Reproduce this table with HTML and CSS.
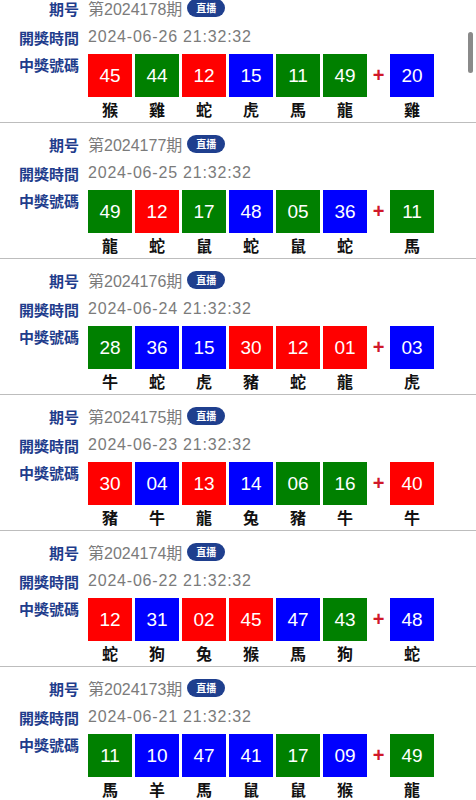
FILE: index.html
```html
<!DOCTYPE html>
<html lang="zh-Hant">
<head>
<meta charset="utf-8">
<link rel="stylesheet" href="styles.css">
</head>
<body>
<div class="list">
  <section class="draw">
    <div class="lbl">期号</div>
    <div class="val"><span class="issue">第2024178期</span><span class="live">直播</span></div>
    <div class="lbl">開獎時間</div>
    <div class="val date">2024-06-26 21:32:32</div>
    <div class="lbl lbl-top">中獎號碼</div>
    <div class="balls">
      <div class="ball"><span class="num red">45</span><span class="zod">猴</span></div>
      <div class="ball"><span class="num green">44</span><span class="zod">雞</span></div>
      <div class="ball"><span class="num red">12</span><span class="zod">蛇</span></div>
      <div class="ball"><span class="num blue">15</span><span class="zod">虎</span></div>
      <div class="ball"><span class="num green">11</span><span class="zod">馬</span></div>
      <div class="ball"><span class="num green">49</span><span class="zod">龍</span></div>
      <div class="plus">+</div>
      <div class="ball"><span class="num blue">20</span><span class="zod">雞</span></div>
    </div>
  </section>
  <section class="draw">
    <div class="lbl">期号</div>
    <div class="val"><span class="issue">第2024177期</span><span class="live">直播</span></div>
    <div class="lbl">開獎時間</div>
    <div class="val date">2024-06-25 21:32:32</div>
    <div class="lbl lbl-top">中獎號碼</div>
    <div class="balls">
      <div class="ball"><span class="num green">49</span><span class="zod">龍</span></div>
      <div class="ball"><span class="num red">12</span><span class="zod">蛇</span></div>
      <div class="ball"><span class="num green">17</span><span class="zod">鼠</span></div>
      <div class="ball"><span class="num blue">48</span><span class="zod">蛇</span></div>
      <div class="ball"><span class="num green">05</span><span class="zod">鼠</span></div>
      <div class="ball"><span class="num blue">36</span><span class="zod">蛇</span></div>
      <div class="plus">+</div>
      <div class="ball"><span class="num green">11</span><span class="zod">馬</span></div>
    </div>
  </section>
  <section class="draw">
    <div class="lbl">期号</div>
    <div class="val"><span class="issue">第2024176期</span><span class="live">直播</span></div>
    <div class="lbl">開獎時間</div>
    <div class="val date">2024-06-24 21:32:32</div>
    <div class="lbl lbl-top">中獎號碼</div>
    <div class="balls">
      <div class="ball"><span class="num green">28</span><span class="zod">牛</span></div>
      <div class="ball"><span class="num blue">36</span><span class="zod">蛇</span></div>
      <div class="ball"><span class="num blue">15</span><span class="zod">虎</span></div>
      <div class="ball"><span class="num red">30</span><span class="zod">豬</span></div>
      <div class="ball"><span class="num red">12</span><span class="zod">蛇</span></div>
      <div class="ball"><span class="num red">01</span><span class="zod">龍</span></div>
      <div class="plus">+</div>
      <div class="ball"><span class="num blue">03</span><span class="zod">虎</span></div>
    </div>
  </section>
  <section class="draw">
    <div class="lbl">期号</div>
    <div class="val"><span class="issue">第2024175期</span><span class="live">直播</span></div>
    <div class="lbl">開獎時間</div>
    <div class="val date">2024-06-23 21:32:32</div>
    <div class="lbl lbl-top">中獎號碼</div>
    <div class="balls">
      <div class="ball"><span class="num red">30</span><span class="zod">豬</span></div>
      <div class="ball"><span class="num blue">04</span><span class="zod">牛</span></div>
      <div class="ball"><span class="num red">13</span><span class="zod">龍</span></div>
      <div class="ball"><span class="num blue">14</span><span class="zod">兔</span></div>
      <div class="ball"><span class="num green">06</span><span class="zod">豬</span></div>
      <div class="ball"><span class="num green">16</span><span class="zod">牛</span></div>
      <div class="plus">+</div>
      <div class="ball"><span class="num red">40</span><span class="zod">牛</span></div>
    </div>
  </section>
  <section class="draw">
    <div class="lbl">期号</div>
    <div class="val"><span class="issue">第2024174期</span><span class="live">直播</span></div>
    <div class="lbl">開獎時間</div>
    <div class="val date">2024-06-22 21:32:32</div>
    <div class="lbl lbl-top">中獎號碼</div>
    <div class="balls">
      <div class="ball"><span class="num red">12</span><span class="zod">蛇</span></div>
      <div class="ball"><span class="num blue">31</span><span class="zod">狗</span></div>
      <div class="ball"><span class="num red">02</span><span class="zod">兔</span></div>
      <div class="ball"><span class="num red">45</span><span class="zod">猴</span></div>
      <div class="ball"><span class="num blue">47</span><span class="zod">馬</span></div>
      <div class="ball"><span class="num green">43</span><span class="zod">狗</span></div>
      <div class="plus">+</div>
      <div class="ball"><span class="num blue">48</span><span class="zod">蛇</span></div>
    </div>
  </section>
  <section class="draw">
    <div class="lbl">期号</div>
    <div class="val"><span class="issue">第2024173期</span><span class="live">直播</span></div>
    <div class="lbl">開獎時間</div>
    <div class="val date">2024-06-21 21:32:32</div>
    <div class="lbl lbl-top">中獎號碼</div>
    <div class="balls">
      <div class="ball"><span class="num green">11</span><span class="zod">馬</span></div>
      <div class="ball"><span class="num blue">10</span><span class="zod">羊</span></div>
      <div class="ball"><span class="num blue">47</span><span class="zod">馬</span></div>
      <div class="ball"><span class="num blue">41</span><span class="zod">鼠</span></div>
      <div class="ball"><span class="num green">17</span><span class="zod">鼠</span></div>
      <div class="ball"><span class="num blue">09</span><span class="zod">猴</span></div>
      <div class="plus">+</div>
      <div class="ball"><span class="num green">49</span><span class="zod">龍</span></div>
    </div>
  </section>
</div>
<div class="scrollbar"></div>
</body>
</html>
```

FILE: styles.css
```css
html, body {
  margin: 0;
  padding: 0;
  background: #ffffff;
  overflow: hidden;
}
body {
  font-family: "Liberation Sans", "Noto Sans CJK TC", sans-serif;
  width: 476px;
  height: 800px;
  position: relative;
}
.list {
  margin-top: -13px;
}
.draw {
  display: grid;
  grid-template-columns: 79px 1fr;
  column-gap: 9px;
  grid-template-rows: 28px 30px auto;
  padding-top: 7px;
  border-bottom: 1px solid #bdbdbd;
  height: 128px;
}
.lbl {
  font-family: "Noto Sans CJK TC", sans-serif;
  font-weight: 700;
  font-size: 15px;
  color: #1f3d8c;
  text-align: right;
  white-space: nowrap;
  display: flex;
  align-items: center;
  justify-content: flex-end;
}
.lbl-top {
  align-items: flex-start;
  margin-top: 2px;
  line-height: 22px;
}
.val {
  display: flex;
  align-items: center;
  color: #7b7b7b;
  font-size: 16px;
  white-space: nowrap;
}
.issue {
  font-family: "Liberation Sans", "Noto Sans CJK TC", sans-serif;
}
.date {
  letter-spacing: 0.8px;
}
.live {
  margin-left: 5px;
  width: 38px;
  height: 18px;
  border-radius: 9px;
  background: #1f3f8e;
  color: #ffffff;
  font-family: "Noto Sans CJK TC", sans-serif;
  font-weight: 700;
  font-size: 10px;
  line-height: 18px;
  text-align: center;
  letter-spacing: 0;
}
.balls {
  display: flex;
  gap: 3px;
  margin-top: 2px;
}
.ball {
  display: flex;
  flex-direction: column;
  align-items: center;
  width: 44px;
}
.num {
  width: 44px;
  height: 43px;
  display: flex;
  align-items: center;
  justify-content: center;
  color: #ffffff;
  font-size: 19px;
  font-family: "Liberation Sans", sans-serif;
}
.red { background: #ff0000; }
.green { background: #008000; }
.blue { background: #0000ff; }
.zod {
  font-family: "Noto Sans CJK TC", sans-serif;
  font-weight: 700;
  font-size: 16px;
  color: #111111;
  line-height: 25px;
}
.plus {
  width: 17px;
  height: 43px;
  display: flex;
  align-items: center;
  justify-content: center;
  color: #d0182a;
  font-size: 20px;
  font-weight: 700;
}
.scrollbar {
  position: absolute;
  right: 3px;
  top: 32px;
  width: 5px;
  height: 41px;
  border-radius: 3px;
  background: #8a8a8a;
}
```
